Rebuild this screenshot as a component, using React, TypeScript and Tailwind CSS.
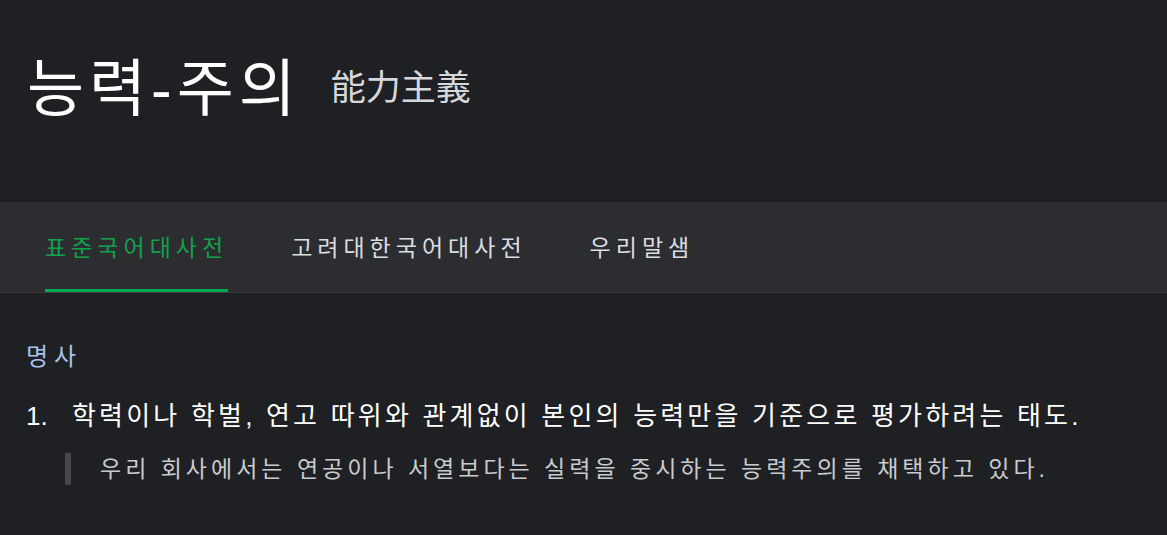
const font = { fontFamily: '"Liberation Sans", "Noto Sans CJK KR", sans-serif' };

const tabs = ['표준국어대사전', '고려대한국어대사전', '우리말샘'];

export default function App() {
  return (
    <div className="w-[1167px] h-[535px] bg-[#1f2023] overflow-hidden" style={font}>
      {/* Headword */}
      <div className="h-[202px] flex items-start pl-[27px] pt-[47px]">
        <h1 className="text-[62px] leading-[86px] tracking-[5px] text-white font-normal">능력-주의</h1>
        <span className="ml-[30px] mt-[16px] text-[35px] leading-[50px] text-[#d4d7dc]">能力主義</span>
      </div>

      {/* Dictionary tabs */}
      <div className="h-[91px] bg-[#2c2d31] border-b border-[#3a3b3f] flex pl-[45px] gap-[63px]">
        {tabs.map((t, i) => (
          <div
            key={t}
            className={
              'flex items-center text-[23px] tracking-[5px] pt-[6px] border-b-[3px] ' +
              (i === 0 ? 'text-[#13a04c] border-[#00aa4e]' : 'text-[#dcdde0] border-transparent')
            }
          >
            {t}
          </div>
        ))}
      </div>

      {/* Definitions */}
      <div className="pl-[26px] pt-[48px]">
        <div className="text-[24px] leading-[32px] text-[#a9c3ea] tracking-[6px]">명사</div>
        <div className="mt-[27px] flex text-[26px] leading-[32px] text-white">
          <span className="w-[46px]">1.</span>
          <span className="tracking-[3.2px]">학력이나 학벌, 연고 따위와 관계없이 본인의 능력만을 기준으로 평가하려는 태도.</span>
        </div>
        <div className="mt-[21px] ml-[39px] flex items-center gap-[29px]">
          <div className="w-[6px] h-[32px] bg-[#46474a]" />
          <span className="text-[23px] leading-[32px] text-[#c9cbcf] tracking-[4px]">
            우리 회사에서는 연공이나 서열보다는 실력을 중시하는 능력주의를 채택하고 있다.
          </span>
        </div>
      </div>
    </div>
  );
}
